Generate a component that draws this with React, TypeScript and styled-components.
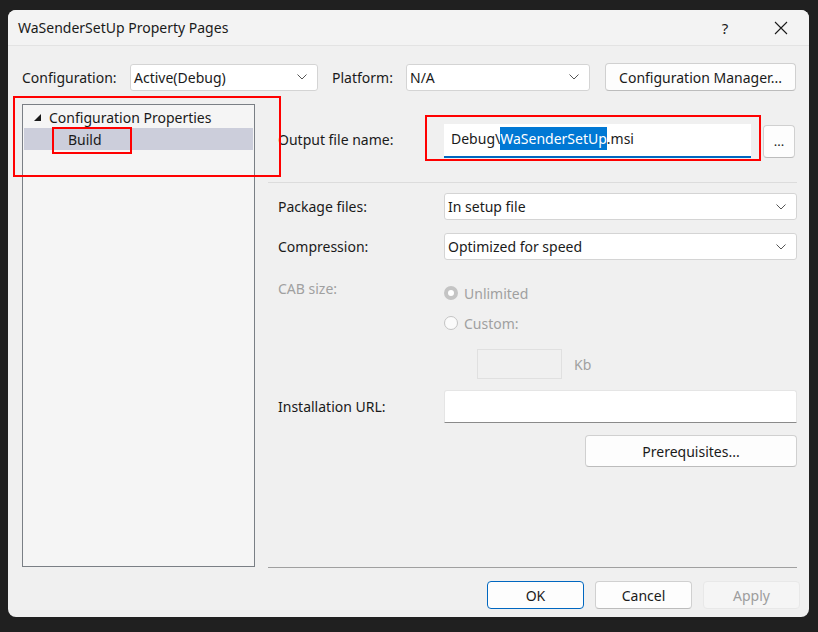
import React from 'react';
import styled, { createGlobalStyle } from 'styled-components';

const GlobalStyle = createGlobalStyle`
  html, body {
    margin: 0;
    padding: 0;
    background: #202020;
  }
  body {
    font-family: "Noto Sans", "Open Sans", sans-serif;
    font-size: 14px;
    color: #1a1a1a;
  }
`;

const Page = styled.div`
  width: 818px;
  height: 632px;
  padding: 10px 0 0 8px;
  box-sizing: border-box;
`;

const Window = styled.div`
  position: relative;
  width: 801px;
  height: 607px;
  background: #f0f0f0;
  border-radius: 8px;
  overflow: hidden;
  display: flex;
  flex-direction: column;
`;

const TitleBar = styled.div`
  height: 35px;
  display: flex;
  align-items: center;
  background: #f3f3f3;
  border-bottom: 1px solid #e3e3e3;
  padding-left: 10px;
  flex-shrink: 0;
`;

const Title = styled.div`
  flex: 1;
  font-size: 14px;
  color: #1a1a1a;
`;

const TitleButton = styled.div`
  width: 56px;
  height: 35px;
  display: flex;
  align-items: center;
  justify-content: center;
  font-size: 15px;
  color: #1a1a1a;
`;

const Body = styled.div`
  flex: 1;
  display: flex;
  flex-direction: column;
  padding: 17px 12px 0 14px;
`;

const ConfigRow = styled.div`
  display: flex;
  align-items: center;
  height: 28px;
`;

const Label = styled.span<{ $disabled?: boolean }>`
  color: ${(p) => (p.$disabled ? '#a0a0a0' : '#1a1a1a')};
  white-space: nowrap;
`;

const Select = styled.div<{ $width?: number }>`
  box-sizing: border-box;
  ${(p) => (p.$width ? `width: ${p.$width}px;` : 'flex: 1;')}
  height: 27px;
  background: #ffffff;
  border: 1px solid #d4d4d4;
  border-radius: 3px;
  display: flex;
  align-items: center;
  padding: 0 10px 0 3px;
  color: #1a1a1a;
`;

const SelectText = styled.span`
  flex: 1;
  white-space: nowrap;
`;

const Chevron = () => (
  <svg width="10" height="6" viewBox="0 0 10 6">
    <path d="M0.5 0.5 L5 5 L9.5 0.5" fill="none" stroke="#555" strokeWidth="1" />
  </svg>
);

const Button = styled.div<{ $width?: number; $default?: boolean; $disabled?: boolean }>`
  box-sizing: border-box;
  width: ${(p) => (p.$width ? `${p.$width}px` : 'auto')};
  height: 28px;
  display: flex;
  align-items: center;
  justify-content: center;
  background: ${(p) => (p.$disabled ? '#f5f5f5' : '#fdfdfd')};
  border: 1px solid ${(p) => (p.$default ? '#0067c0' : p.$disabled ? '#e8e8e8' : '#d0d0d0')};
  border-bottom-color: ${(p) => (p.$default ? '#0067c0' : p.$disabled ? '#e8e8e8' : '#bcbcbc')};
  border-radius: 4px;
  color: ${(p) => (p.$disabled ? '#9d9d9d' : '#1a1a1a')};
  white-space: nowrap;
`;

const Main = styled.div`
  display: flex;
  margin-top: 13px;
`;

const Tree = styled.div`
  box-sizing: border-box;
  width: 233px;
  height: 463px;
  background: #f5f5f5;
  border: 1px solid #7a7f85;
  padding-top: 1px;
`;

const TreeItem = styled.div<{ $selected?: boolean; $indent: number }>`
  height: 22px;
  margin: 0 1px;
  display: flex;
  align-items: center;
  padding-left: ${(p) => p.$indent}px;
  background: ${(p) => (p.$selected ? '#cccedb' : 'transparent')};
  color: #1a1a1a;
`;

const Expander = styled.span`
  width: 0;
  height: 0;
  border-left: 7px solid transparent;
  border-bottom: 7px solid #1a1a1a;
  margin-right: 8px;
`;

const RightPanel = styled.div`
  flex: 1;
  margin-left: 13px;
  display: flex;
  flex-direction: column;
  border-bottom: 1px solid #a0a0a0;
  height: 464px;
  box-sizing: border-box;
`;

const Section = styled.div<{ $top: number }>`
  padding: ${(p) => p.$top}px 0 0 10px;
  display: grid;
  grid-template-columns: 166px 1fr;
  align-items: center;
`;

const Divider = styled.div`
  height: 1px;
  background: #dcdcdc;
  margin-top: 24px;
`;

const OutputField = styled.div`
  display: flex;
  align-items: center;
`;

const TextBox = styled.div<{ $focused?: boolean }>`
  box-sizing: border-box;
  flex: 1;
  height: 34px;
  background: #ffffff;
  border-bottom: 2px solid ${(p) => (p.$focused ? '#0067c0' : '#8a8a8a')};
  ${(p) => (p.$focused ? '' : 'border-bottom-width: 1px; border-radius: 3px 3px 0 0; border-top: 1px solid #e5e5e5; border-left: 1px solid #e5e5e5; border-right: 1px solid #e5e5e5;')}
  display: flex;
  align-items: center;
  padding: 0 0 3px 7px;
  white-space: nowrap;
`;

const Selected = styled.span`
  background: #0078d4;
  color: #ffffff;
  padding: 2px 0;
`;

const BrowseButton = styled(Button)`
  width: 32px;
  height: 33px;
  margin-left: 12px;
  margin-right: 2px;
  font-size: 13px;
`;

const Row = styled.div<{ $gap: number }>`
  grid-column: 1 / -1;
  display: grid;
  grid-template-columns: 166px 1fr;
  align-items: center;
  margin-top: ${(p) => p.$gap}px;
`;

const RadioGroup = styled.div`
  display: flex;
  flex-direction: column;
  gap: 10px;
`;

const RadioOption = styled.div`
  display: flex;
  align-items: center;
  gap: 6px;
  color: #a0a0a0;
  height: 20px;
`;

const Radio = styled.span<{ $checked?: boolean }>`
  box-sizing: border-box;
  width: 14px;
  height: 14px;
  border-radius: 50%;
  ${(p) =>
    p.$checked
      ? 'background: #ffffff; border: 4px solid #c4c4c4;'
      : 'background: #fbfbfb; border: 1px solid #c4c4c4;'}
`;

const KbRow = styled.div`
  display: flex;
  align-items: center;
  gap: 12px;
  margin: 16px 0 0 33px;
  color: #a0a0a0;
`;

const KbBox = styled.div`
  width: 85px;
  height: 30px;
  box-sizing: border-box;
  border: 1px solid #e0e0e0;
`;

const ButtonRight = styled.div`
  grid-column: 2;
  display: flex;
  justify-content: flex-end;
  margin-top: 12px;
`;

const Footer = styled.div`
  display: flex;
  justify-content: flex-end;
  gap: 11px;
  padding-top: 13px;
  margin-right: -3px;
`;

const Annotation = styled.div<{ $left: number; $top: number; $w: number; $h: number }>`
  position: absolute;
  left: ${(p) => p.$left}px;
  top: ${(p) => p.$top}px;
  width: ${(p) => p.$w}px;
  height: ${(p) => p.$h}px;
  box-sizing: border-box;
  border: 2px solid #ff0000;
  pointer-events: none;
`;

const CloseIcon = () => (
  <svg width="14" height="14" viewBox="0 0 14 14">
    <path d="M1 1 L13 13 M13 1 L1 13" stroke="#1a1a1a" strokeWidth="1.1" />
  </svg>
);

const App = () => {
  return (
    <Page>
      <GlobalStyle />
      <Window>
        <TitleBar>
          <Title>WaSenderSetUp Property Pages</Title>
          <TitleButton>?</TitleButton>
          <TitleButton>
            <CloseIcon />
          </TitleButton>
        </TitleBar>
        <Body>
          <ConfigRow>
            <Label style={{ width: 108 }}>Configuration:</Label>
            <Select $width={188}>
              <SelectText>Active(Debug)</SelectText>
              <Chevron />
            </Select>
            <Label style={{ width: 74, marginLeft: 14 }}>Platform:</Label>
            <Select $width={184}>
              <SelectText>N/A</SelectText>
              <Chevron />
            </Select>
            <Button $width={191} style={{ marginLeft: 15 }}>
              Configuration Manager...
            </Button>
          </ConfigRow>
          <Main>
            <Tree>
              <TreeItem $indent={10}>
                <Expander />
                Configuration Properties
              </TreeItem>
              <TreeItem $indent={44} $selected>
                Build
              </TreeItem>
            </Tree>
            <RightPanel>
              <Section $top={20}>
                <Label style={{ marginTop: -3 }}>Output file name:</Label>
                <OutputField>
                  <TextBox $focused>
                    Debug\<Selected>WaSenderSetUp</Selected>.msi
                  </TextBox>
                  <BrowseButton>...</BrowseButton>
                </OutputField>
              </Section>
              <Divider />
              <Section $top={10}>
                <Label>Package files:</Label>
                <Select>
                  <SelectText>In setup file</SelectText>
                  <Chevron />
                </Select>
                <Row $gap={13}>
                  <Label>Compression:</Label>
                  <Select>
                    <SelectText>Optimized for speed</SelectText>
                    <Chevron />
                  </Select>
                </Row>
                <Row $gap={23} style={{ alignItems: 'start' }}>
                  <Label $disabled style={{ marginTop: -4 }}>
                    CAB size:
                  </Label>
                  <div>
                    <RadioGroup>
                      <RadioOption>
                        <Radio $checked />
                        Unlimited
                      </RadioOption>
                      <RadioOption>
                        <Radio />
                        Custom:
                      </RadioOption>
                    </RadioGroup>
                    <KbRow>
                      <KbBox />
                      Kb
                    </KbRow>
                  </div>
                </Row>
                <Row $gap={11}>
                  <Label>Installation URL:</Label>
                  <TextBox style={{ height: 33 }} />
                </Row>
                <ButtonRight>
                  <Button $width={212} style={{ height: 32 }}>
                    Prerequisites...
                  </Button>
                </ButtonRight>
              </Section>
            </RightPanel>
          </Main>
          <Footer>
            <Button $width={97} $default>
              OK
            </Button>
            <Button $width={97}>Cancel</Button>
            <Button $width={97} $disabled>
              Apply
            </Button>
          </Footer>
        </Body>
        <Annotation $left={5} $top={86} $w={268} $h={81} />
        <Annotation $left={44} $top={117} $w={80} $h={27} />
        <Annotation $left={417} $top={105} $w={336} $h={46} />
      </Window>
    </Page>
  );
};

export default App;
